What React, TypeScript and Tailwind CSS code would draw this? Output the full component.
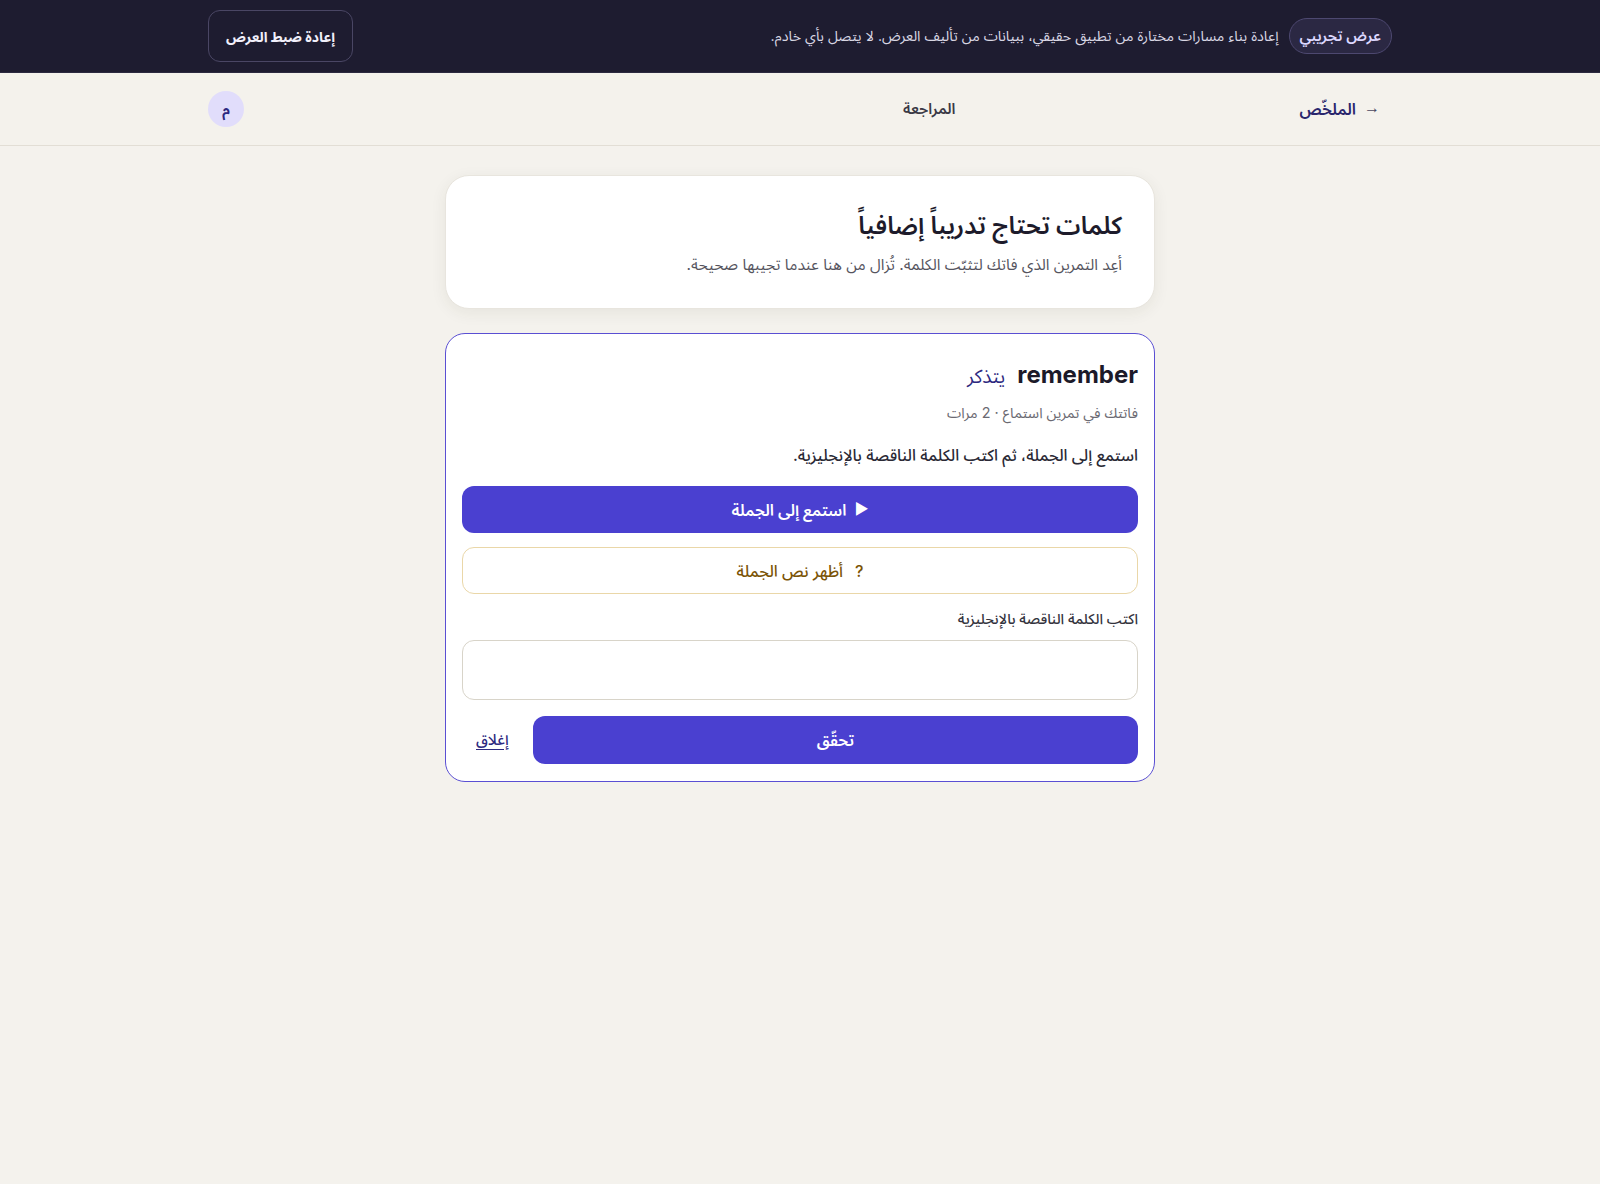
import { useState } from "react";

function DemoBar() {
    return (
        <div className="bg-[#1e1c30] border-b border-[#2c2a40]">
            <div className="mx-auto max-w-7xl px-12 h-[72px] flex items-center justify-between">
                <div className="flex items-center gap-[10px]">
                    <span className="rounded-full border border-[#4d4870] bg-[#2b2843] px-[10px] py-[6px] text-[15px] font-semibold text-[#ddd8ff]">
                        عرض تجريبي
                    </span>
                    <p className="text-[14.3px] text-[#d9d7e4]">
                        إعادة بناء مسارات مختارة من تطبيق حقيقي، ببيانات من تأليف العرض. لا يتصل بأي خادم.
                    </p>
                </div>
                <button className="h-[52px] w-[145px] rounded-xl border border-[#4a4664] text-[14px] font-bold text-[#f1effa] cursor-pointer">
                    إعادة ضبط العرض
                </button>
            </div>
        </div>
    );
}

function TopNav() {
    return (
        <div className="bg-[#f4f2ec] border-b border-[#e2ded5]">
            <div className="mx-auto max-w-7xl px-12 h-[72px] flex items-center">
                <a href="#" className="flex items-center gap-2 px-3 text-[16px] font-semibold text-[#29266c]">
                    <span className="-mt-1 font-['Noto_Sans',sans-serif] font-normal text-[#4a4860]">→</span>
                    <span>الملخّص</span>
                </a>
                <h2 className="mr-[332px] text-[15px] font-semibold text-[#3a3945]">المراجعة</h2>
                <div className="mr-auto flex h-9 w-9 items-center justify-center rounded-full bg-[#e1ddfb] text-[14px] font-bold text-[#2c2780]">
                    م
                </div>
            </div>
        </div>
    );
}

function ReviewCard() {
    const [answer, setAnswer] = useState("");
    const [showText, setShowText] = useState(false);

    return (
        <div className="rounded-[20px] border-[1.5px] border-[#5a4fd3] bg-white px-4 pt-4 pb-[17px]">
            <div className="flex h-[50px] items-center gap-3">
                <span className="text-[24px] font-bold text-[#1c1a29]" dir="ltr">remember</span>
                <span className="pt-1 text-[19px] text-[#2d2980]">يتذكر</span>
            </div>
            <p className="mt-[3px] text-[14.4px] leading-5 text-[#6b6a72]">فاتتك في تمرين استماع · 2 مرات</p>
            <p className="mt-5 text-[16px] leading-6 font-medium text-[#2a2935]">
                استمع إلى الجملة، ثم اكتب الكلمة الناقصة بالإنجليزية.
            </p>
            <button className="mt-[19px] flex h-[47px] w-full items-center justify-center gap-2 rounded-xl bg-[#4a40d0] text-[16px] font-semibold text-white cursor-pointer">
                <span className="text-[15px]">▶</span>
                <span>استمع إلى الجملة</span>
            </button>
            <button
                onClick={() => setShowText(!showText)}
                className="mt-[14px] flex h-[47px] w-full items-center justify-center gap-3 rounded-xl border border-[#ead7a8] bg-white text-[16px] font-medium text-[#7b5406] cursor-pointer"
            >
                <span>?</span>
                <span>أظهر نص الجملة</span>
            </button>
            <label className="mt-[15px] block text-[14.4px] leading-5 font-medium text-[#34333d]">
                اكتب الكلمة الناقصة بالإنجليزية
            </label>
            <input
                className="mt-[11px] block h-[60px] w-full rounded-xl border border-[#d8d4c9] bg-white px-4 text-[16px] outline-none"
                dir="ltr"
                value={answer}
                onChange={(e) => setAnswer(e.target.value)}
            />
            <div className="mt-4 flex items-center gap-6">
                <button className="h-12 flex-1 rounded-xl bg-[#4a40d0] text-[16px] font-semibold text-white cursor-pointer">
                    تحقّق
                </button>
                <a href="#" className="ml-[14px] text-[15px] font-medium text-[#2d2980] underline underline-offset-4">
                    إغلاق
                </a>
            </div>
        </div>
    );
}

export default function App() {
    return (
        <div dir="rtl" className="min-h-screen bg-[#f4f2ed] font-['Inter','Noto_Sans_Arabic','Noto_Naskh_Arabic','DejaVu_Sans',sans-serif]">
            <DemoBar />
            <TopNav />
            <main className="mx-auto max-w-[710px] pt-[29px] flex flex-col gap-6">
                <div className="rounded-3xl border border-[#e8e5de] bg-white px-8 pt-[29px] pb-[31px] shadow-[0_4px_16px_rgba(60,50,30,0.07)]">
                    <h1 className="text-[24.5px] leading-10 font-semibold text-[#1d1b2b]">كلمات تحتاج تدريباً إضافياً</h1>
                    <p className="mt-2 text-[15.5px] leading-6 text-[#55545e]">
                        أعِد التمرين الذي فاتك لتثبّت الكلمة. تُزال من هنا عندما تجيبها صحيحة.
                    </p>
                </div>
                <ReviewCard />
            </main>
        </div>
    );
}
